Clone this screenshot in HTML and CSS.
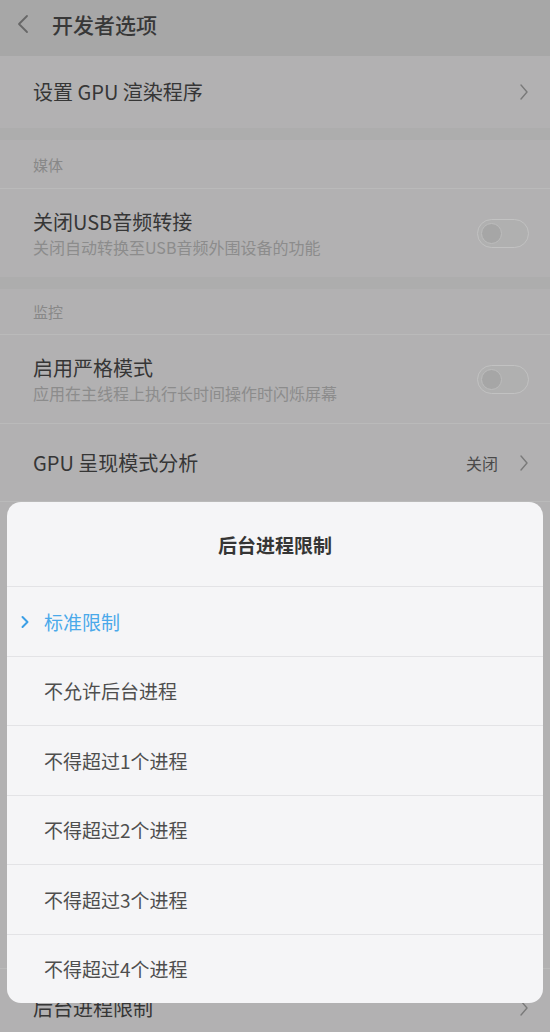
FILE: index.html
```html
<!DOCTYPE html>
<html lang="zh-CN">
<head>
<meta charset="utf-8">
<title>开发者选项</title>
<link rel="stylesheet" href="styles.css">
</head>
<body>
<div class="screen">
  <header class="topbar">
    <svg class="back" width="12" height="20" viewBox="0 0 12 20"><path d="M10 2 L2 10 L10 18" fill="none" stroke="#676767" stroke-width="1.8" stroke-linecap="round" stroke-linejoin="round"/></svg>
    <h1 class="topbar-title">开发者选项</h1>
  </header>

  <section class="group">
    <div class="row single">
      <span class="row-title">设置 GPU 渲染程序</span>
      <svg class="chev" width="10" height="18" viewBox="0 0 10 18"><path d="M2 2 L8 9 L2 16" fill="none" stroke="#7a7a7a" stroke-width="1.4" stroke-linecap="round" stroke-linejoin="round"/></svg>
    </div>
  </section>

  <section class="group">
    <div class="group-title">媒体</div>
    <div class="row double">
      <div class="row-text">
        <span class="row-title">关闭USB音频转接</span>
        <span class="row-sub">关闭自动转换至USB音频外围设备的功能</span>
      </div>
      <span class="toggle"><span class="knob"></span></span>
    </div>
  </section>

  <section class="group">
    <div class="group-title second">监控</div>
    <div class="row double">
      <div class="row-text">
        <span class="row-title">启用严格模式</span>
        <span class="row-sub">应用在主线程上执行长时间操作时闪烁屏幕</span>
      </div>
      <span class="toggle"><span class="knob"></span></span>
    </div>
    <div class="row single">
      <span class="row-title">GPU 呈现模式分析</span>
      <span class="row-value">关闭</span>
      <svg class="chev" width="10" height="18" viewBox="0 0 10 18"><path d="M2 2 L8 9 L2 16" fill="none" stroke="#7a7a7a" stroke-width="1.4" stroke-linecap="round" stroke-linejoin="round"/></svg>
    </div>
    <div class="covered-rows"></div>
    <div class="row single last">
      <span class="row-title">后台进程限制</span>
      <svg class="chev" width="10" height="18" viewBox="0 0 10 18"><path d="M2 2 L8 9 L2 16" fill="none" stroke="#7a7a7a" stroke-width="1.4" stroke-linecap="round" stroke-linejoin="round"/></svg>
    </div>
  </section>

  <div class="dialog">
    <div class="dialog-title">后台进程限制</div>
    <div class="option selected">
      <svg class="sel-chev" width="10" height="14" viewBox="0 0 10 14"><path d="M2.5 2 L7.5 7 L2.5 12" fill="none" stroke="#3b9fe6" stroke-width="2" stroke-linecap="round" stroke-linejoin="round"/></svg>
      <span>标准限制</span>
    </div>
    <div class="option"><span>不允许后台进程</span></div>
    <div class="option"><span>不得超过1个进程</span></div>
    <div class="option"><span>不得超过2个进程</span></div>
    <div class="option"><span>不得超过3个进程</span></div>
    <div class="option"><span>不得超过4个进程</span></div>
  </div>
</div>
</body>
</html>
```
FILE: styles.css
```css
* { box-sizing: border-box; }
html, body { margin: 0; padding: 0; }
body {
  width: 550px;
  height: 1032px;
  overflow: hidden;
  background: #b1b1b1;
  font-family: "Noto Sans CJK SC", "Noto Sans", sans-serif;
}
.screen {
  position: relative;
  width: 550px;
  height: 1032px;
  overflow: hidden;
  background: #adadad;
}
.topbar {
  height: 56px;
  background: #a7a7a7;
  display: flex;
  align-items: center;
  padding-left: 17px;
  padding-bottom: 8px;
}
.back { display: block; margin-right: 23px; }
.topbar-title {
  margin: 0;
  font-size: 21px;
  font-weight: 500;
  color: #383838;
  line-height: 28px;
}
.group {
  background: #b2b1b2;
  margin-bottom: 12px;
}
.group + .group + .group { margin-bottom: 0; }
.group-title {
  height: 48px;
  padding-left: 33px;
  display: flex;
  align-items: center;
  font-size: 15px;
  color: #888888;
}
.group-title.second { height: 45px; }
.row {
  display: flex;
  align-items: center;
  padding: 0 21px 0 33px;
  border-top: 1px solid #bababa;
}
.group > .row:first-child { border-top: none; }
.row.single { height: 72px; }
.group + .group + .group .row.single { height: 78px; }
.row.double { height: 89px; }
.covered-rows {
  height: 467px;
  border-top: 1px solid #bababa;
}
.row-text {
  display: flex;
  flex-direction: column;
  flex: 1;
}
.row-title {
  flex: 1;
  font-size: 20px;
  line-height: 26px;
  color: #363636;
}
.row-text .row-title { flex: none; }
.row-sub {
  font-size: 16px;
  line-height: 20px;
  margin-top: 2px;
  color: #8c8c8c;
}
.row-value {
  font-size: 16px;
  color: #4a4a4a;
  margin-right: 21px;
}
.chev { display: block; }
.toggle {
  width: 52px;
  height: 29px;
  border-radius: 15px;
  border: 1px solid #c2c2c2;
  background: #b0b0b0;
  display: flex;
  align-items: center;
  padding-left: 3px;
}
.knob {
  width: 21px;
  height: 21px;
  border-radius: 50%;
  background: #a6a6a6;
  border: 1px solid #bcbcbc;
}
.dialog {
  position: absolute;
  left: 7px;
  top: 502px;
  width: 536px;
  height: 501px;
  background: #f5f5f7;
  border-radius: 14px;
  overflow: hidden;
}
.dialog-title {
  height: 84px;
  display: flex;
  align-items: center;
  justify-content: center;
  font-size: 19px;
  font-weight: 700;
  color: #353535;
}
.option {
  height: 69.5px;
  border-top: 1px solid #e3e3e6;
  display: flex;
  align-items: center;
  padding-left: 37px;
  font-size: 19px;
  color: #4e4e4e;
  position: relative;
}
.option.selected { color: #4aa9ea; }
.sel-chev {
  position: absolute;
  left: 13px;
  top: 28px;
}
```
